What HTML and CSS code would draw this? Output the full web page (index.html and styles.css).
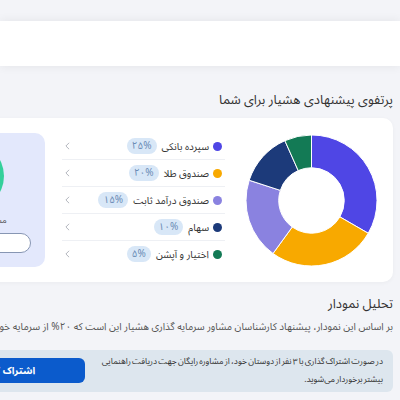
FILE: index.html
```html
<!DOCTYPE html>
<html lang="fa" dir="rtl">
<head>
<meta charset="utf-8">
<link rel="stylesheet" href="styles.css">
</head>
<body>
<header class="topbar"></header>
<main class="page">
  <h2 class="title">پرتفوی پیشنهادی هشیار برای شما</h2>
  <section class="card">
    <div class="chart">
      <svg class="donut" viewBox="0 0 134 134" width="133" height="133">
        <path class="seg s1" d="M67 1 A66 66 0 0 1 124.16 100 L95.58 83.5 A33 33 0 0 0 67 34 Z"/>
        <path class="seg s2" d="M124.16 100 A66 66 0 0 1 28.21 120.4 L47.6 93.7 A33 33 0 0 0 95.58 83.5 Z"/>
        <path class="seg s3" d="M28.21 120.4 A66 66 0 0 1 4.23 46.61 L35.61 56.8 A33 33 0 0 0 47.6 93.7 Z"/>
        <path class="seg s4" d="M4.23 46.61 A66 66 0 0 1 40.16 6.71 L53.58 36.85 A33 33 0 0 0 35.61 56.8 Z"/>
        <path class="seg s5" d="M40.16 6.71 A66 66 0 0 1 67 1 L67 34 A33 33 0 0 0 53.58 36.85 Z"/>
      </svg>
    </div>
    <ul class="legend">
      <li class="row"><span class="dot c1"></span><span class="label">سپرده بانکی</span><span class="pill">۲۵%</span><svg class="chev" viewBox="0 0 6 10" width="6" height="10"><path d="M5 1 L1 5 L5 9"/></svg></li>
      <li class="row"><span class="dot c2"></span><span class="label">صندوق طلا</span><span class="pill">۲۰%</span><svg class="chev" viewBox="0 0 6 10" width="6" height="10"><path d="M5 1 L1 5 L5 9"/></svg></li>
      <li class="row"><span class="dot c3"></span><span class="label">صندوق درآمد ثابت</span><span class="pill">۱۵%</span><svg class="chev" viewBox="0 0 6 10" width="6" height="10"><path d="M5 1 L1 5 L5 9"/></svg></li>
      <li class="row"><span class="dot c4"></span><span class="label">سهام</span><span class="pill">۱۰%</span><svg class="chev" viewBox="0 0 6 10" width="6" height="10"><path d="M5 1 L1 5 L5 9"/></svg></li>
      <li class="row"><span class="dot c5"></span><span class="label">اختیار و آپشن</span><span class="pill">۵%</span><svg class="chev" viewBox="0 0 6 10" width="6" height="10"><path d="M5 1 L1 5 L5 9"/></svg></li>
    </ul>
    <div class="promo">
      <div class="avatar"></div>
      <div class="promo-text">مشاوره رایگان هشیار</div>
      <button class="outline-btn">اطلاعات بیشتر</button>
    </div>
  </section>
  <h3 class="sub">تحلیل نمودار</h3>
  <p class="desc">بر اساس این نمودار، پیشنهاد کارشناسان مشاور سرمایه گذاری هشیار این است که ۲۰% از سرمایه خودرا در سپرده بانکی سرمایه گذاری کنند.</p>
  <div class="alert">
    <p class="alert-text"><span class="line">در صورت اشتراک گذاری با ۳ نفر از دوستان خود، از مشاوره رایگان جهت دریافت راهنمایی</span><span class="line">بیشتر برخوردار می‌شوید.</span></p>
    <button class="share">اشتراک گذاری</button>
  </div>
</main>
</body>
</html>
```

FILE: styles.css
```css
html, body {
  margin: 0;
  overflow: hidden;
  background: #f3f4f8;
}
body {
  width: 400px;
  height: 400px;
  padding-top: 21px;
  box-sizing: border-box;
  font-family: "Noto Sans Arabic", "Vazirmatn", "DejaVu Sans", sans-serif;
  color: #333;
}
.topbar {
  height: 45px;
  background: #fff;
  box-shadow: 0 0 10px rgba(0, 0, 0, 0.07);
}
.page {
  width: 510px;
  padding-right: 7px;
}
.title {
  margin: 24px 0 8px;
  font-size: 13px;
  font-weight: 400;
  line-height: 20px;
  color: #333;
}
.card {
  display: flex;
  background: #fff;
  border-radius: 10px;
  padding: 15px 15px 15px 12px;
  box-shadow: 0 1px 4px rgba(0, 0, 0, 0.04);
}
.chart {
  width: 133px;
  flex: none;
  display: flex;
  align-items: center;
  margin-left: 20px;
}
.donut { display: block; }
.seg { stroke: #fff; stroke-width: 1; }
.s1 { fill: #4f46e5; }
.s2 { fill: #f8a900; }
.s3 { fill: #8a82e0; }
.s4 { fill: #1c3a7a; }
.s5 { fill: #137a55; }
.legend {
  width: 163px;
  flex: none;
  margin: 0 0 0 17px;
  padding: 0;
  list-style: none;
}
.row {
  display: flex;
  align-items: center;
  height: 26px;
  padding-right: 3px;
  border-bottom: 1px solid #eef0f4;
}
.row:last-child { border-bottom: 0; }
.dot {
  width: 9px;
  height: 9px;
  border-radius: 50%;
  flex: none;
  margin-left: 4px;
}
.c1 { background: #4f46e5; }
.c2 { background: #f8a900; }
.c3 { background: #8a82e0; }
.c4 { background: #1c3a7a; }
.c5 { background: #137a55; }
.label {
  font-size: 10px;
  color: #333;
  white-space: nowrap;
}
.pill {
  margin-right: 5px;
  height: 16px;
  line-height: 16px;
  padding: 0 5px;
  border-radius: 8px;
  background: #d8e7f7;
  color: #6a8bb5;
  font-size: 10px;
}
.chev {
  margin-right: auto;
  margin-left: 3px;
  width: 5px;
  height: 8px;
}
.chev path {
  fill: none;
  stroke: #a8adb5;
  stroke-width: 1.1;
}
.promo {
  flex: 1;
  background: #e3e8fc;
  border-radius: 10px;
  display: flex;
  flex-direction: column;
  align-items: center;
  overflow: hidden;
}
.avatar {
  width: 68px;
  height: 68px;
  border-radius: 50%;
  background: #34d09b;
  margin-top: 9px;
}
.promo-text {
  margin-top: 4px;
  font-size: 9px;
  line-height: 14px;
  color: #555;
}
.outline-btn {
  margin-top: 5px;
  width: 122px;
  height: 20px;
  border: 1px solid #8796b3;
  border-radius: 10px;
  background: #fff;
  font-family: inherit;
  font-size: 8px;
  color: #444;
}
.sub {
  margin: 13px 0 0;
  font-size: 13px;
  font-weight: 400;
  line-height: 18px;
  color: #333;
}
.desc {
  margin: 6px 0 0;
  font-size: 10px;
  line-height: 16px;
  color: #555;
  white-space: nowrap;
}
.alert {
  margin-top: 15px;
  display: flex;
  align-items: center;
  gap: 4px;
  background: #dde6ee;
  border-radius: 6px;
  padding: 2px 10px 4px 42px;
}
.alert-text {
  width: 294px;
  flex: none;
  margin: 0;
  font-size: 8.5px;
  line-height: 18px;
  word-spacing: -1px;
  color: #333;
}
.line {
  display: block;
  white-space: nowrap;
}
.share {
  width: 160px;
  height: 25px;
  flex: none;
  border: 0;
  border-radius: 6px;
  background: #0b5bcc;
  color: #fff;
  font-family: inherit;
  font-size: 10px;
  font-weight: 700;
}
```
